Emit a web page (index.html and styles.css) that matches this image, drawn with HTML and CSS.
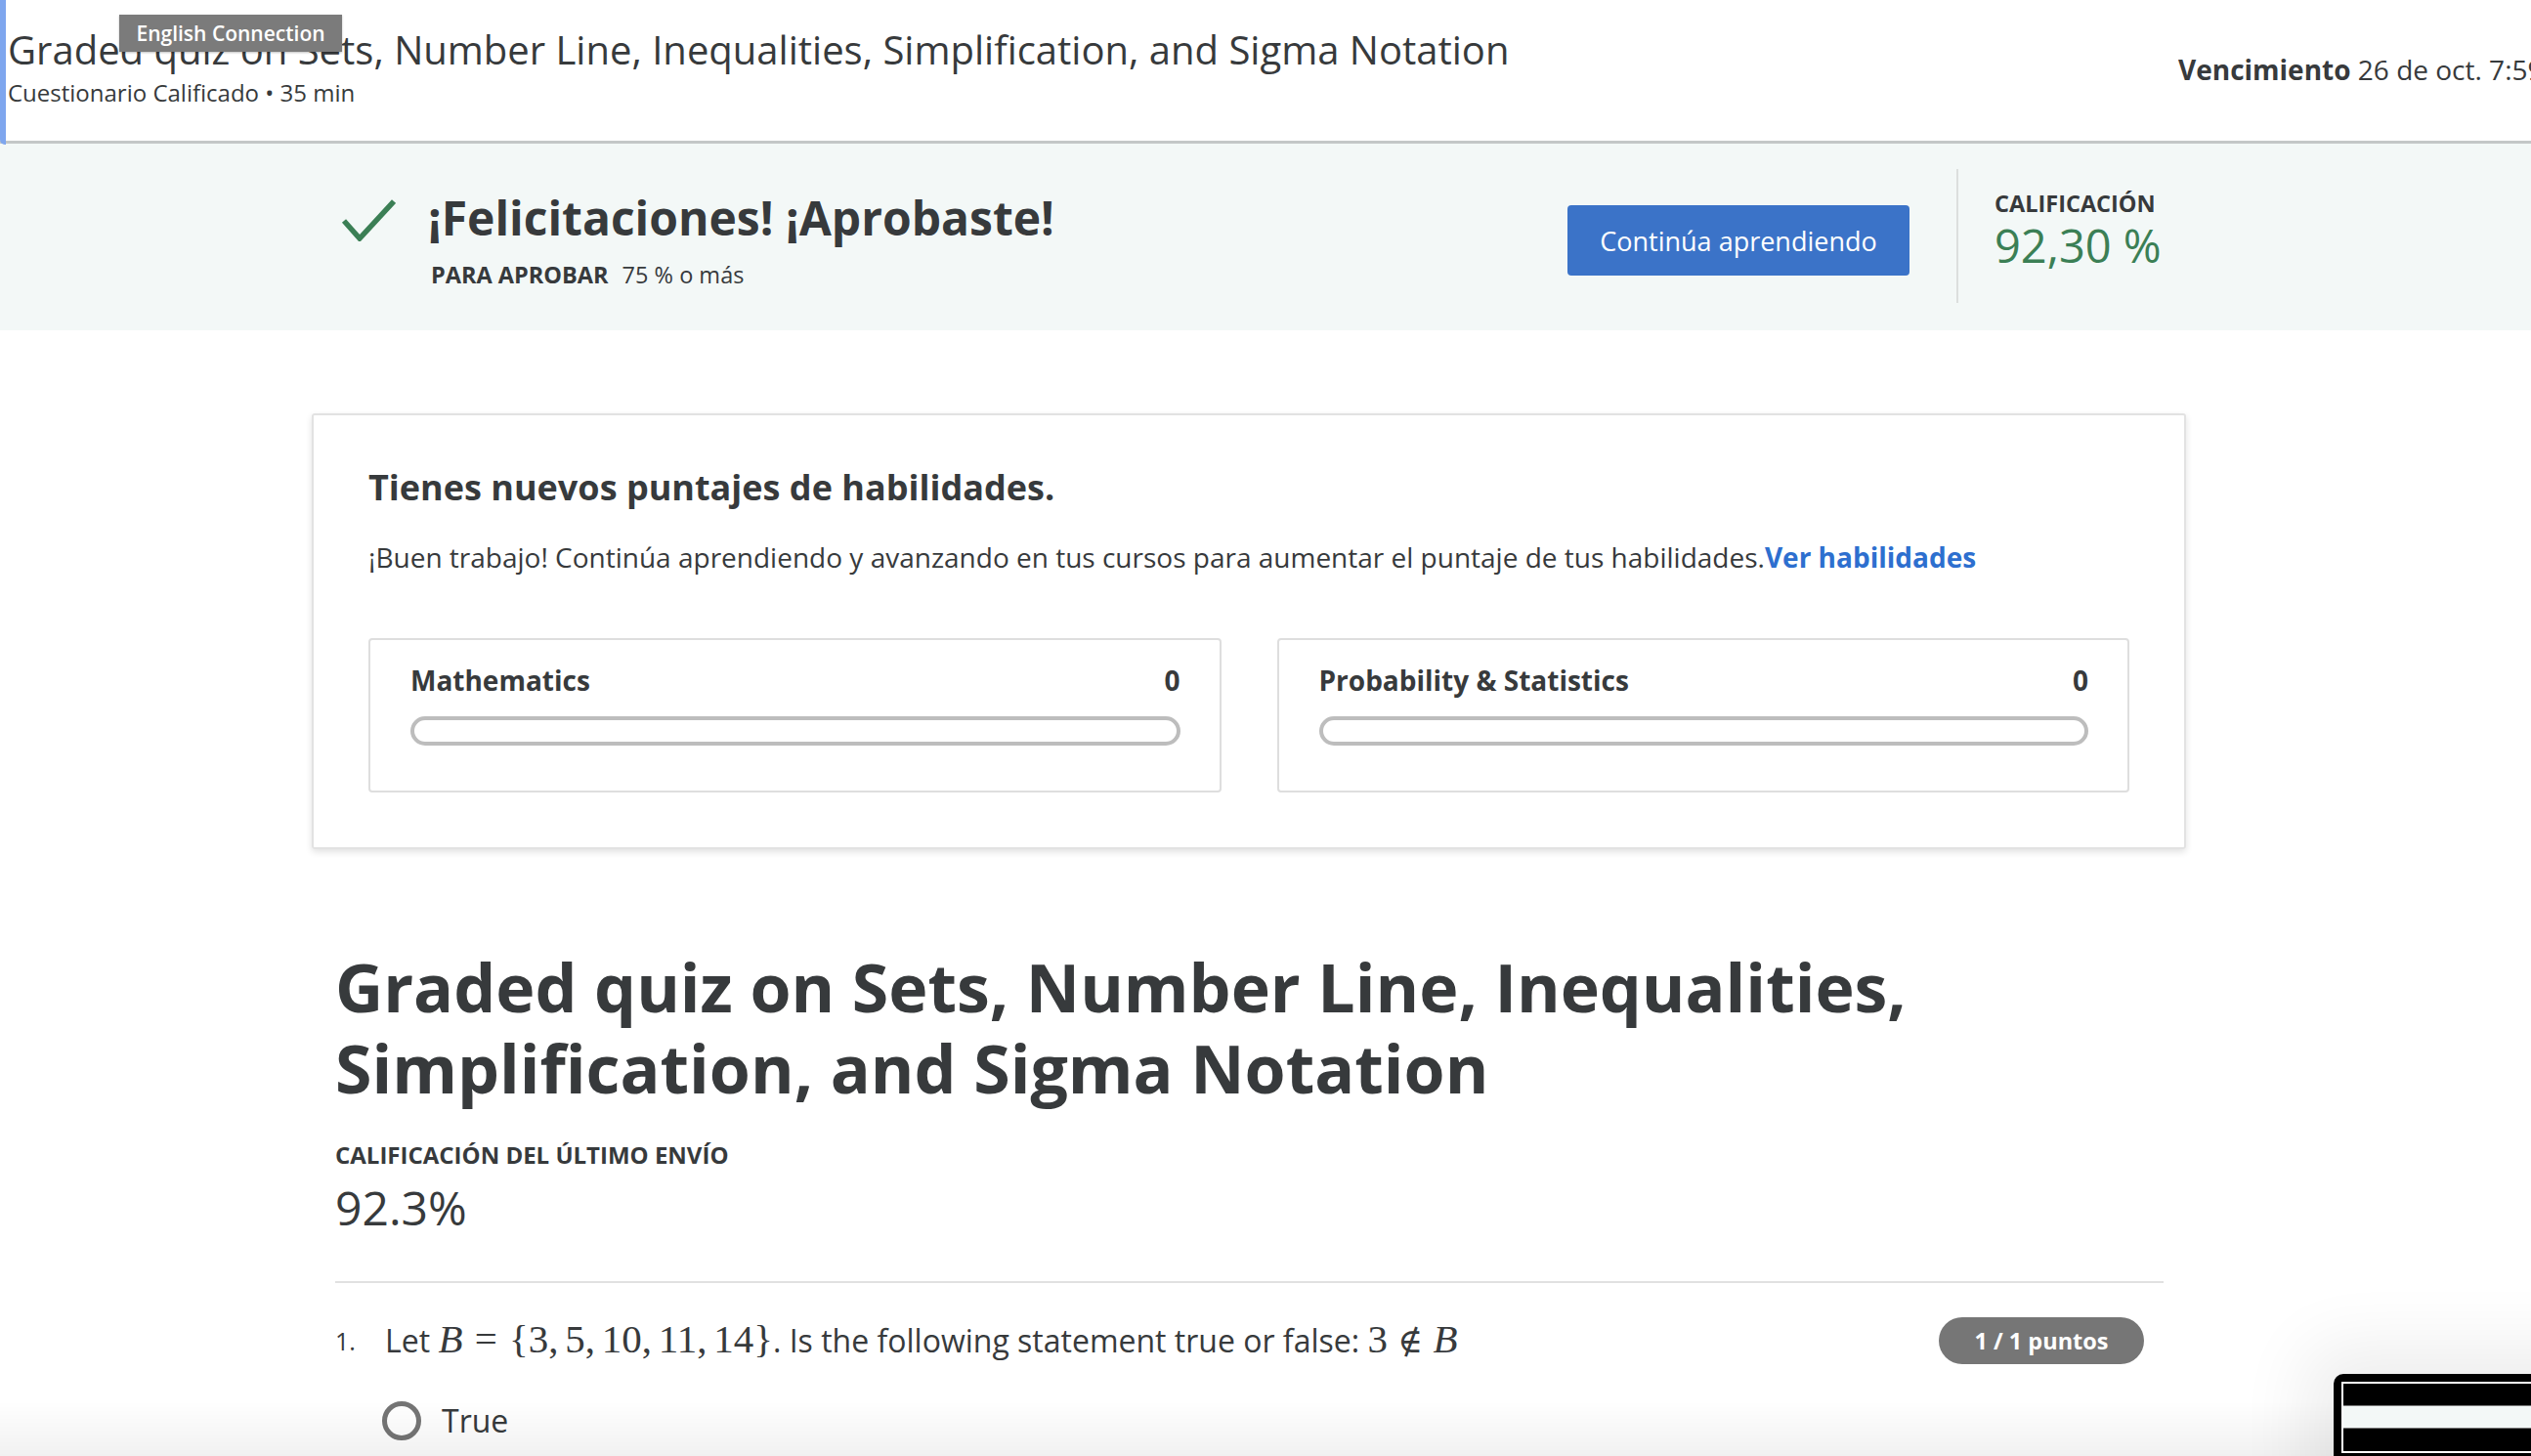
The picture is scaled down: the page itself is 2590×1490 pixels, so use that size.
FILE: index.html
```html
<!DOCTYPE html>
<html lang="es">
<head>
<meta charset="utf-8">
<title>Graded quiz on Sets, Number Line, Inequalities, Simplification, and Sigma Notation</title>
<link rel="stylesheet" href="styles.css">
</head>
<body>
<header class="topbar">
  <div class="topbar-main">
    <h2 class="topbar-title">Graded quiz on Sets, Number Line, Inequalities, Simplification, and Sigma Notation</h2>
    <div class="topbar-sub">Cuestionario Calificado • 35 min</div>
  </div>
  <div class="due"><strong>Vencimiento</strong> 26 de oct. 7:59 PM CST</div>
  <div class="tooltip">English Connection</div>
</header>

<section class="banner">
  <div class="banner-inner">
    <svg class="check" width="56" height="44" viewBox="0 0 56 44" aria-hidden="true">
      <polyline points="3,23 19,41 54,3" fill="none" stroke="#3b7f55" stroke-width="5.5"/>
    </svg>
    <div class="banner-text">
      <div class="banner-title">¡Felicitaciones! ¡Aprobaste!</div>
      <div class="banner-pass"><strong>PARA APROBAR</strong> 75 % o más</div>
    </div>
    <button class="btn-primary">Continúa aprendiendo</button>
    <div class="vdivider"></div>
    <div class="grade">
      <div class="grade-label">CALIFICACIÓN</div>
      <div class="grade-value">92,30 %</div>
    </div>
  </div>
</section>

<main class="content">
  <section class="skills-card">
    <h3 class="skills-title">Tienes nuevos puntajes de habilidades.</h3>
    <p class="skills-text">¡Buen trabajo! Continúa aprendiendo y avanzando en tus cursos para aumentar el puntaje de tus habilidades.<a class="skills-link" href="#">Ver habilidades</a></p>
    <div class="skills-grid">
      <div class="skill-box">
        <div class="skill-head"><span>Mathematics</span><span>0</span></div>
        <div class="skill-bar"></div>
      </div>
      <div class="skill-box">
        <div class="skill-head"><span>Probability &amp; Statistics</span><span>0</span></div>
        <div class="skill-bar"></div>
      </div>
    </div>
  </section>

  <section class="quiz">
    <h1 class="quiz-title">Graded quiz on Sets, Number Line, Inequalities, Simplification, and Sigma Notation</h1>
    <div class="quiz-label">CALIFICACIÓN DEL ÚLTIMO ENVÍO</div>
    <div class="quiz-score">92.3%</div>
    <div class="quiz-rule"></div>
    <div class="question">
      <span class="q-num">1.</span>
      <div class="q-text">Let <span class="math"><i>B</i><span class="rel">=</span>{3,<span class="thin"></span>5,<span class="thin"></span>10,<span class="thin"></span>11,<span class="thin"></span>14}</span>. Is the following statement true or false: <span class="math">3<span class="rel notin">∉</span><i>B</i></span></div>
      <span class="badge">1 / 1 puntos</span>
    </div>
    <div class="option">
      <span class="radio"></span>
      <span class="option-label">True</span>
    </div>
  </section>
</main>

<div class="bottom-fade"></div>
<div class="mini-thumb">
  <div class="mini-inner">
    <div class="mini-stripe mini-dark"></div>
    <div class="mini-stripe mini-light"></div>
    <div class="mini-stripe mini-dark mini-last"></div>
  </div>
</div>
</body>
</html>
```

FILE: styles.css
```css
html, body {
  margin: 0;
  padding: 0;
}
body {
  width: 2590px;
  height: 1490px;
  overflow: hidden;
  background: #ffffff;
  font-family: "Open Sans", "Noto Sans", "DejaVu Sans", sans-serif;
  color: #373a3c;
}

/* ---------- Top bar ---------- */
.topbar {
  position: relative;
  display: flex;
  height: 144px;
  border-bottom: 3px solid #c3c7c7;
}
.topbar::before {
  content: "";
  position: absolute;
  left: 0;
  top: 0;
  width: 6px;
  height: 148px;
  background: #7ea6ee;
  border-bottom-left-radius: 5px;
}
.topbar-main {
  padding: 24px 0 0 8px;
}
.topbar-title {
  margin: 0;
  font-size: 40px;
  line-height: 54px;
  font-weight: 400;
  white-space: nowrap;
}
.topbar-sub {
  font-size: 24px;
  line-height: 33px;
}
.due {
  margin-left: auto;
  width: 361px;
  flex-shrink: 0;
  padding-top: 52px;
  font-size: 28px;
  line-height: 38px;
  white-space: nowrap;
  overflow: hidden;
}
.due strong {
  font-weight: 700;
}
.tooltip {
  position: absolute;
  left: 122px;
  top: 15px;
  width: 228px;
  height: 38px;
  background: #7b7b7b;
  color: #ffffff;
  font-size: 21px;
  font-weight: 600;
  line-height: 38px;
  text-align: center;
  box-shadow: 0 1px 2px rgba(0, 0, 0, 0.25);
}

/* ---------- Banner ---------- */
.banner {
  background: #f3f8f7;
  padding: 26px 0 28px 349px;
}
.banner-inner {
  display: flex;
  align-items: flex-start;
  width: 1888px;
}
.check {
  display: block;
  flex-shrink: 0;
  margin-top: 30px;
  margin-right: 33px;
}
.banner-text {
  flex: 1;
  margin-top: 22px;
}
.banner-title {
  font-size: 48px;
  line-height: 56px;
  font-weight: 700;
}
.banner-pass {
  margin-top: 14px;
  padding-left: 3px;
  font-size: 23.5px;
  line-height: 32px;
}
.banner-pass strong {
  font-weight: 700;
  margin-right: 8px;
}
.btn-primary {
  flex-shrink: 0;
  width: 350px;
  height: 72px;
  margin-top: 37px;
  border: 0;
  border-radius: 4px;
  background: #3b73c8;
  color: #ffffff;
  font-family: "Open Sans", "Noto Sans", sans-serif;
  font-size: 27px;
  font-weight: 400;
  padding: 0;
}
.vdivider {
  flex-shrink: 0;
  width: 2px;
  height: 137px;
  margin-left: 48px;
  background: #dcdfde;
}
.grade {
  flex-shrink: 0;
  width: 196px;
  margin-left: 37px;
  margin-top: 20px;
}
.grade-label {
  font-size: 23.5px;
  line-height: 31px;
  font-weight: 700;
}
.grade-value {
  font-size: 47px;
  line-height: 54px;
  color: #3b7f55;
}

/* ---------- Content ---------- */
.content {
  width: 1918px;
  padding-left: 319px;
  padding-top: 85px;
}
.skills-card {
  border: 2px solid #e2e2e2;
  border-radius: 3px;
  box-shadow: 0 3px 7px rgba(0, 0, 0, 0.12);
  padding: 50px 56px 56px 56px;
}
.skills-title {
  margin: 0;
  font-size: 36px;
  line-height: 48px;
  font-weight: 700;
}
.skills-text {
  margin: 28px 0 0 0;
  font-size: 28px;
  line-height: 38px;
}
.skills-link {
  color: #2d6fcf;
  font-weight: 700;
  text-decoration: none;
}
.skills-grid {
  margin-top: 64px;
  display: grid;
  grid-template-columns: 1fr 1fr;
  gap: 57px;
}
.skill-box {
  border: 2px solid #dedede;
  border-radius: 4px;
  padding: 22px 40px 46px 41px;
}
.skill-head {
  display: flex;
  justify-content: space-between;
  font-size: 28px;
  line-height: 38px;
  font-weight: 700;
}
.skill-bar {
  margin-top: 18px;
  height: 22px;
  border: 4px solid #bdbdbd;
  border-radius: 15px;
  background: #ffffff;
}

/* ---------- Quiz ---------- */
.quiz {
  padding: 0 23px 0 24px;
}
.quiz-title {
  margin: 99px 0 0 0;
  font-size: 68px;
  line-height: 83px;
  font-weight: 700;
}
.quiz-label {
  margin-top: 32px;
  font-size: 24px;
  line-height: 32px;
  font-weight: 700;
}
.quiz-score {
  margin-top: 6px;
  font-size: 48px;
  line-height: 64px;
}
.quiz-rule {
  margin-top: 43px;
  height: 2px;
  background: #e1e1e1;
}
.question {
  display: flex;
  align-items: center;
  padding-top: 35px;
  padding-right: 20px;
}
.q-num {
  width: 51px;
  flex-shrink: 0;
  font-size: 25px;
  line-height: 48px;
}
.q-text {
  flex: 1;
  font-size: 32px;
  line-height: 48px;
  white-space: nowrap;
}
.math {
  font-family: "Liberation Serif", "DejaVu Serif", serif;
  font-size: 1.28em;
  line-height: 1;
}
.math i {
  font-style: italic;
}
.rel {
  margin: 0 0.3em;
}
.notin {
  font-family: "DejaVu Serif", "Liberation Serif", serif;
  font-size: 0.85em;
}
.thin {
  display: inline-block;
  width: 0.1667em;
}
.badge {
  flex-shrink: 0;
  width: 210px;
  height: 48px;
  border-radius: 24px;
  background: #767676;
  color: #ffffff;
  font-size: 23.5px;
  font-weight: 700;
  line-height: 48px;
  text-align: center;
}
.option {
  display: flex;
  align-items: center;
  margin-top: 38px;
  padding-left: 48px;
}
.radio {
  width: 30px;
  height: 30px;
  border: 5px solid #757575;
  border-radius: 50%;
  flex-shrink: 0;
}
.option-label {
  margin-left: 21px;
  font-size: 32px;
  line-height: 40px;
}

/* ---------- Overlays ---------- */
.bottom-fade {
  position: fixed;
  left: 0;
  right: 0;
  bottom: 0;
  height: 56px;
  background: linear-gradient(to bottom, rgba(0, 0, 0, 0), rgba(0, 0, 0, 0.055));
  pointer-events: none;
}
.mini-thumb {
  position: fixed;
  left: 2388px;
  top: 1406px;
  width: 260px;
  height: 120px;
  padding: 8px 0 0 8px;
  box-sizing: border-box;
  background: #000000;
  border-radius: 10px;
  box-shadow: 0 0 70px 30px rgba(0, 0, 0, 0.07);
}
.mini-inner {
  border: 2px solid #ffffff;
  border-right: 0;
}
.mini-stripe {
  height: 22px;
  border-bottom: 1px solid #7a7a7a;
}
.mini-dark {
  background: #000000;
}
.mini-light {
  background: #f3f8f7;
}
.mini-last {
  height: 23px;
  border-bottom: 0;
}
```
